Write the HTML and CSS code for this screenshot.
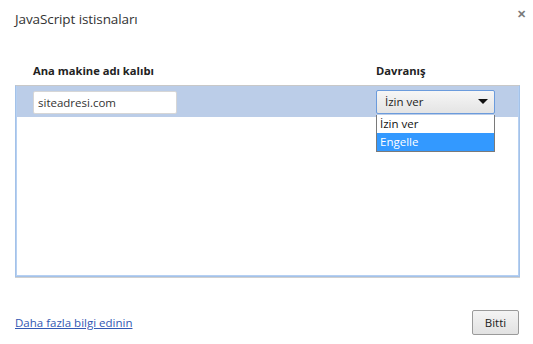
FILE: index.html
```html
<!DOCTYPE html>
<html lang="tr">
<head>
    <meta charset="UTF-8">
    <title>JavaScript istisnaları</title>
    <link rel="stylesheet" href="styles.css">
</head>
<body>
    <div class="dialog">
        <div class="title-bar">
            <h1 class="title">JavaScript istisnaları</h1>
            <span class="close">&#x2715;</span>
        </div>

        <div class="content">
            <div class="col-heads">
                <span class="col-pattern">Ana makine adı kalıbı</span>
                <span class="col-behavior">Davranış</span>
            </div>

            <div class="list">
                <div class="row selected">
                    <div class="col-pattern">
                        <input type="text" class="host-input" value="siteadresi.com">
                    </div>
                    <div class="col-behavior">
                        <div class="select">
                            <span>İzin ver</span>
                            <span class="arrow"></span>
                        </div>
                        <!-- open dropdown -->
                        <ul class="dropdown">
                            <li>İzin ver</li>
                            <li class="active">Engelle</li>
                        </ul>
                    </div>
                </div>
            </div>
        </div>

        <div class="footer">
            <a href="#" class="more-link">Daha fazla bilgi edinin</a>
            <button class="done">Bitti</button>
        </div>
    </div>
</body>
</html>
```

FILE: styles.css
```css
/* dialog */
html, body {
    margin: 0;
    padding: 0;
    background: #fff;
}
body {
    font-family: "Open Sans", "Noto Sans", sans-serif;
    color: #333;
    width: 533px;
    height: 344px;
    overflow: hidden;
}
.dialog {
    padding: 0 13px 0 15px;
}
.title-bar {
    display: flex;
    justify-content: space-between;
    align-items: flex-start;
    height: 52px;
}
.title {
    margin: 10px 0 0 0;
    font-size: 13.5px;
    font-weight: normal;
    color: #333;
    letter-spacing: -0.1px;
}
.close {
    margin-top: 6px;
    font-size: 11px;
    font-weight: bold;
    color: #7a7a7a;
    margin-right: -6px;
}

/* column headers */
.col-heads {
    display: flex;
    font-size: 11.2px;
    font-weight: bold;
    color: #222;
    height: 33px;
    padding-top: 3px;
    box-sizing: border-box;
    align-items: center;
}
.col-pattern {
    width: 361px;
    padding-left: 18px;
    box-sizing: border-box;
}
.col-behavior {
    flex: 1;
    position: relative;
}

/* list box */
.list {
    width: 505px;
    height: 192px;
    box-sizing: border-box;
    border: 1px solid #a4c2e8;
    border-top-color: #c8c8c8;
    box-shadow: inset 0 0 0 1px #b6d0f2, 0 1px 0 #d0d0d0;
}
.row {
    display: flex;
    align-items: center;
    height: 31px;
}
.row.selected {
    background: #bbcde8;
    margin: 0 1px;
}
.host-input {
    width: 144px;
    height: 23px;
    box-sizing: border-box;
    border: 1px solid #d6d6d6;
    border-radius: 2px;
    padding: 0 4px;
    font-family: inherit;
    font-size: 11.5px;
    color: #333;
    margin-left: 0;
}
.row .col-pattern {
    width: 359px;
    padding-left: 16px;
}
.select {
    width: 119px;
    height: 24px;
    box-sizing: border-box;
    border: 1px solid #6b9bdc;
    border-radius: 2px;
    background: linear-gradient(#f6f6f6, #e4e4e4);
    display: flex;
    align-items: center;
    justify-content: space-between;
    padding: 0 6px 0 8px;
    font-size: 11.5px;
    color: #222;
}
.arrow {
    width: 0;
    height: 0;
    border-left: 5px solid transparent;
    border-right: 5px solid transparent;
    border-top: 5px solid #111;
}
.dropdown {
    position: absolute;
    top: 25px;
    left: 0;
    width: 119px;
    box-sizing: border-box;
    margin: 0;
    padding: 0;
    list-style: none;
    background: #fff;
    border: 1px solid #7a7a7a;
    border-top: none;
    font-size: 11.5px;
    color: #111;
}
.dropdown li {
    height: 18px;
    line-height: 18px;
    padding-left: 3px;
}
.dropdown li.active {
    background: #3399ff;
    color: #fff;
}

/* footer */
.footer {
    display: flex;
    justify-content: space-between;
    align-items: center;
    margin-top: 33px;
}
.more-link {
    font-size: 11.5px;
    color: #3258b3;
    text-decoration: underline;
}
.done {
    width: 47px;
    height: 25px;
    margin-right: 1px;
    border: 1px solid #9a9a9a;
    border-radius: 2px;
    background: linear-gradient(#f4f4f4, #e2e2e2);
    font-family: inherit;
    font-size: 11.5px;
    color: #222;
    padding: 0;
}
```
